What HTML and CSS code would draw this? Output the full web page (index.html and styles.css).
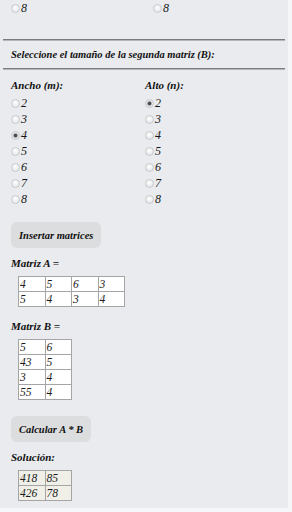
FILE: index.html
```html
<!DOCTYPE html>
<html lang="es">
  <head>
    <meta charset="UTF-8" />
    <meta name="viewport" content="width=device-width, initial-scale=1.0" />
    <title>Multiplicar matrices</title>
    <link rel="stylesheet" href="styles.css">
  </head>
  <body>
    <div class="page">
      <div class="cols top-row">
        <div class="col">
          <label class="opt"><input type="radio" name="am" />8</label>
        </div>
        <div class="col col-right-top">
          <label class="opt"><input type="radio" name="an" />8</label>
        </div>
      </div>

      <hr class="rule" />
      <h3 class="title">Seleccione el tamaño de la segunda matriz (B):</h3>
      <hr class="rule" />

      <div class="cols">
        <div class="col">
          <div class="label">Ancho (m):</div>
          <label class="opt"><input type="radio" name="bm" />2</label>
          <label class="opt"><input type="radio" name="bm" />3</label>
          <label class="opt"><input type="radio" name="bm" checked />4</label>
          <label class="opt"><input type="radio" name="bm" />5</label>
          <label class="opt"><input type="radio" name="bm" />6</label>
          <label class="opt"><input type="radio" name="bm" />7</label>
          <label class="opt"><input type="radio" name="bm" />8</label>
        </div>
        <div class="col col-right">
          <div class="label">Alto (n):</div>
          <label class="opt"><input type="radio" name="bn" checked />2</label>
          <label class="opt"><input type="radio" name="bn" />3</label>
          <label class="opt"><input type="radio" name="bn" />4</label>
          <label class="opt"><input type="radio" name="bn" />5</label>
          <label class="opt"><input type="radio" name="bn" />6</label>
          <label class="opt"><input type="radio" name="bn" />7</label>
          <label class="opt"><input type="radio" name="bn" />8</label>
        </div>
      </div>

      <button class="btn btn-insert">Insertar matrices</button>

      <div class="label">Matriz A =</div>
      <table class="matrix">
        <tr><td>4</td><td>5</td><td>6</td><td>3</td></tr>
        <tr><td>5</td><td>4</td><td>3</td><td>4</td></tr>
      </table>

      <div class="label label-b">Matriz B =</div>
      <table class="matrix">
        <tr><td>5</td><td>6</td></tr>
        <tr><td>43</td><td>5</td></tr>
        <tr><td>3</td><td>4</td></tr>
        <tr><td>55</td><td>4</td></tr>
      </table>

      <button class="btn btn-calc">Calcular A * B</button>

      <div class="label">Solución:</div>
      <table class="matrix result">
        <tr><td>418</td><td>85</td></tr>
        <tr><td>426</td><td>78</td></tr>
      </table>
    </div>
  </body>
</html>
```

FILE: styles.css
```css
body {
  margin: 0;
  background-color: #f5f6f8;
  font-family: "Liberation Serif", serif;
  font-style: italic;
  font-size: 12px;
  color: #111;
}

.page {
  width: 288px;
  height: 508px;
  box-sizing: border-box;
  background-color: #e9ebee;
  padding: 0 0 0 11px;
  overflow: hidden;
}

.cols {
  display: flex;
}

.col {
  width: 134px;
}

.col-right-top {
  padding-left: 8px;
}

.top-row {
  height: 16px;
}

.opt {
  display: flex;
  align-items: center;
  height: 16px;
  color: #161616;
}

.opt input {
  appearance: none;
  margin: 0 1px 0 0;
  width: 9px;
  height: 9px;
  border-radius: 50%;
  border: 1px solid #c8cacd;
  background: radial-gradient(circle at 50% 40%, #ffffff 0%, #e4e5e7 80%);
  box-sizing: border-box;
}

.opt input:checked {
  background: radial-gradient(circle, #444 0, #555 1.5px, #e6e7e9 2.5px);
}

.rule {
  margin: 23px 0 0 -8px;
  width: 282px;
  border: none;
  border-top: 1px solid #7b7c7e;
  border-bottom: 1px solid #b4b5b7;
  height: 0;
}

.title {
  margin: 0;
  height: 27px;
  line-height: 27px;
  font-size: 10.5px;
  font-weight: bold;
}

.title + .rule {
  margin-top: 0;
}

.label {
  height: 16px;
  line-height: 16px;
  font-size: 11px;
  font-weight: bold;
  margin-top: 7px;
}

.cols .label {
  margin-top: 7px;
  margin-bottom: 2px;
}

.btn {
  display: block;
  margin: 15px 0 0 0;
  height: 26px;
  padding: 0 8px;
  border: none;
  border-radius: 6px;
  background-color: #dcdddf;
  font-family: "Liberation Serif", serif;
  font-style: italic;
  font-weight: bold;
  font-size: 10.5px;
  color: #111;
}

.btn-calc {
  margin-top: 16px;
}

.matrix {
  margin: 5px 0 0 7px;
  border-collapse: collapse;
  border: 1px solid #9a9a9a;
}

.matrix td {
  width: 26.5px;
  height: 15px;
  padding: 0 0 0 1px;
  box-sizing: border-box;
  border: 1px solid #a5a5a5;
  background-color: #fff;
  line-height: 13px;
  font-size: 11.5px;
  color: #1a1a1a;
}

.label-b {
  margin-top: 11px;
}

.result td {
  background-color: #f0f0e9;
}
```
